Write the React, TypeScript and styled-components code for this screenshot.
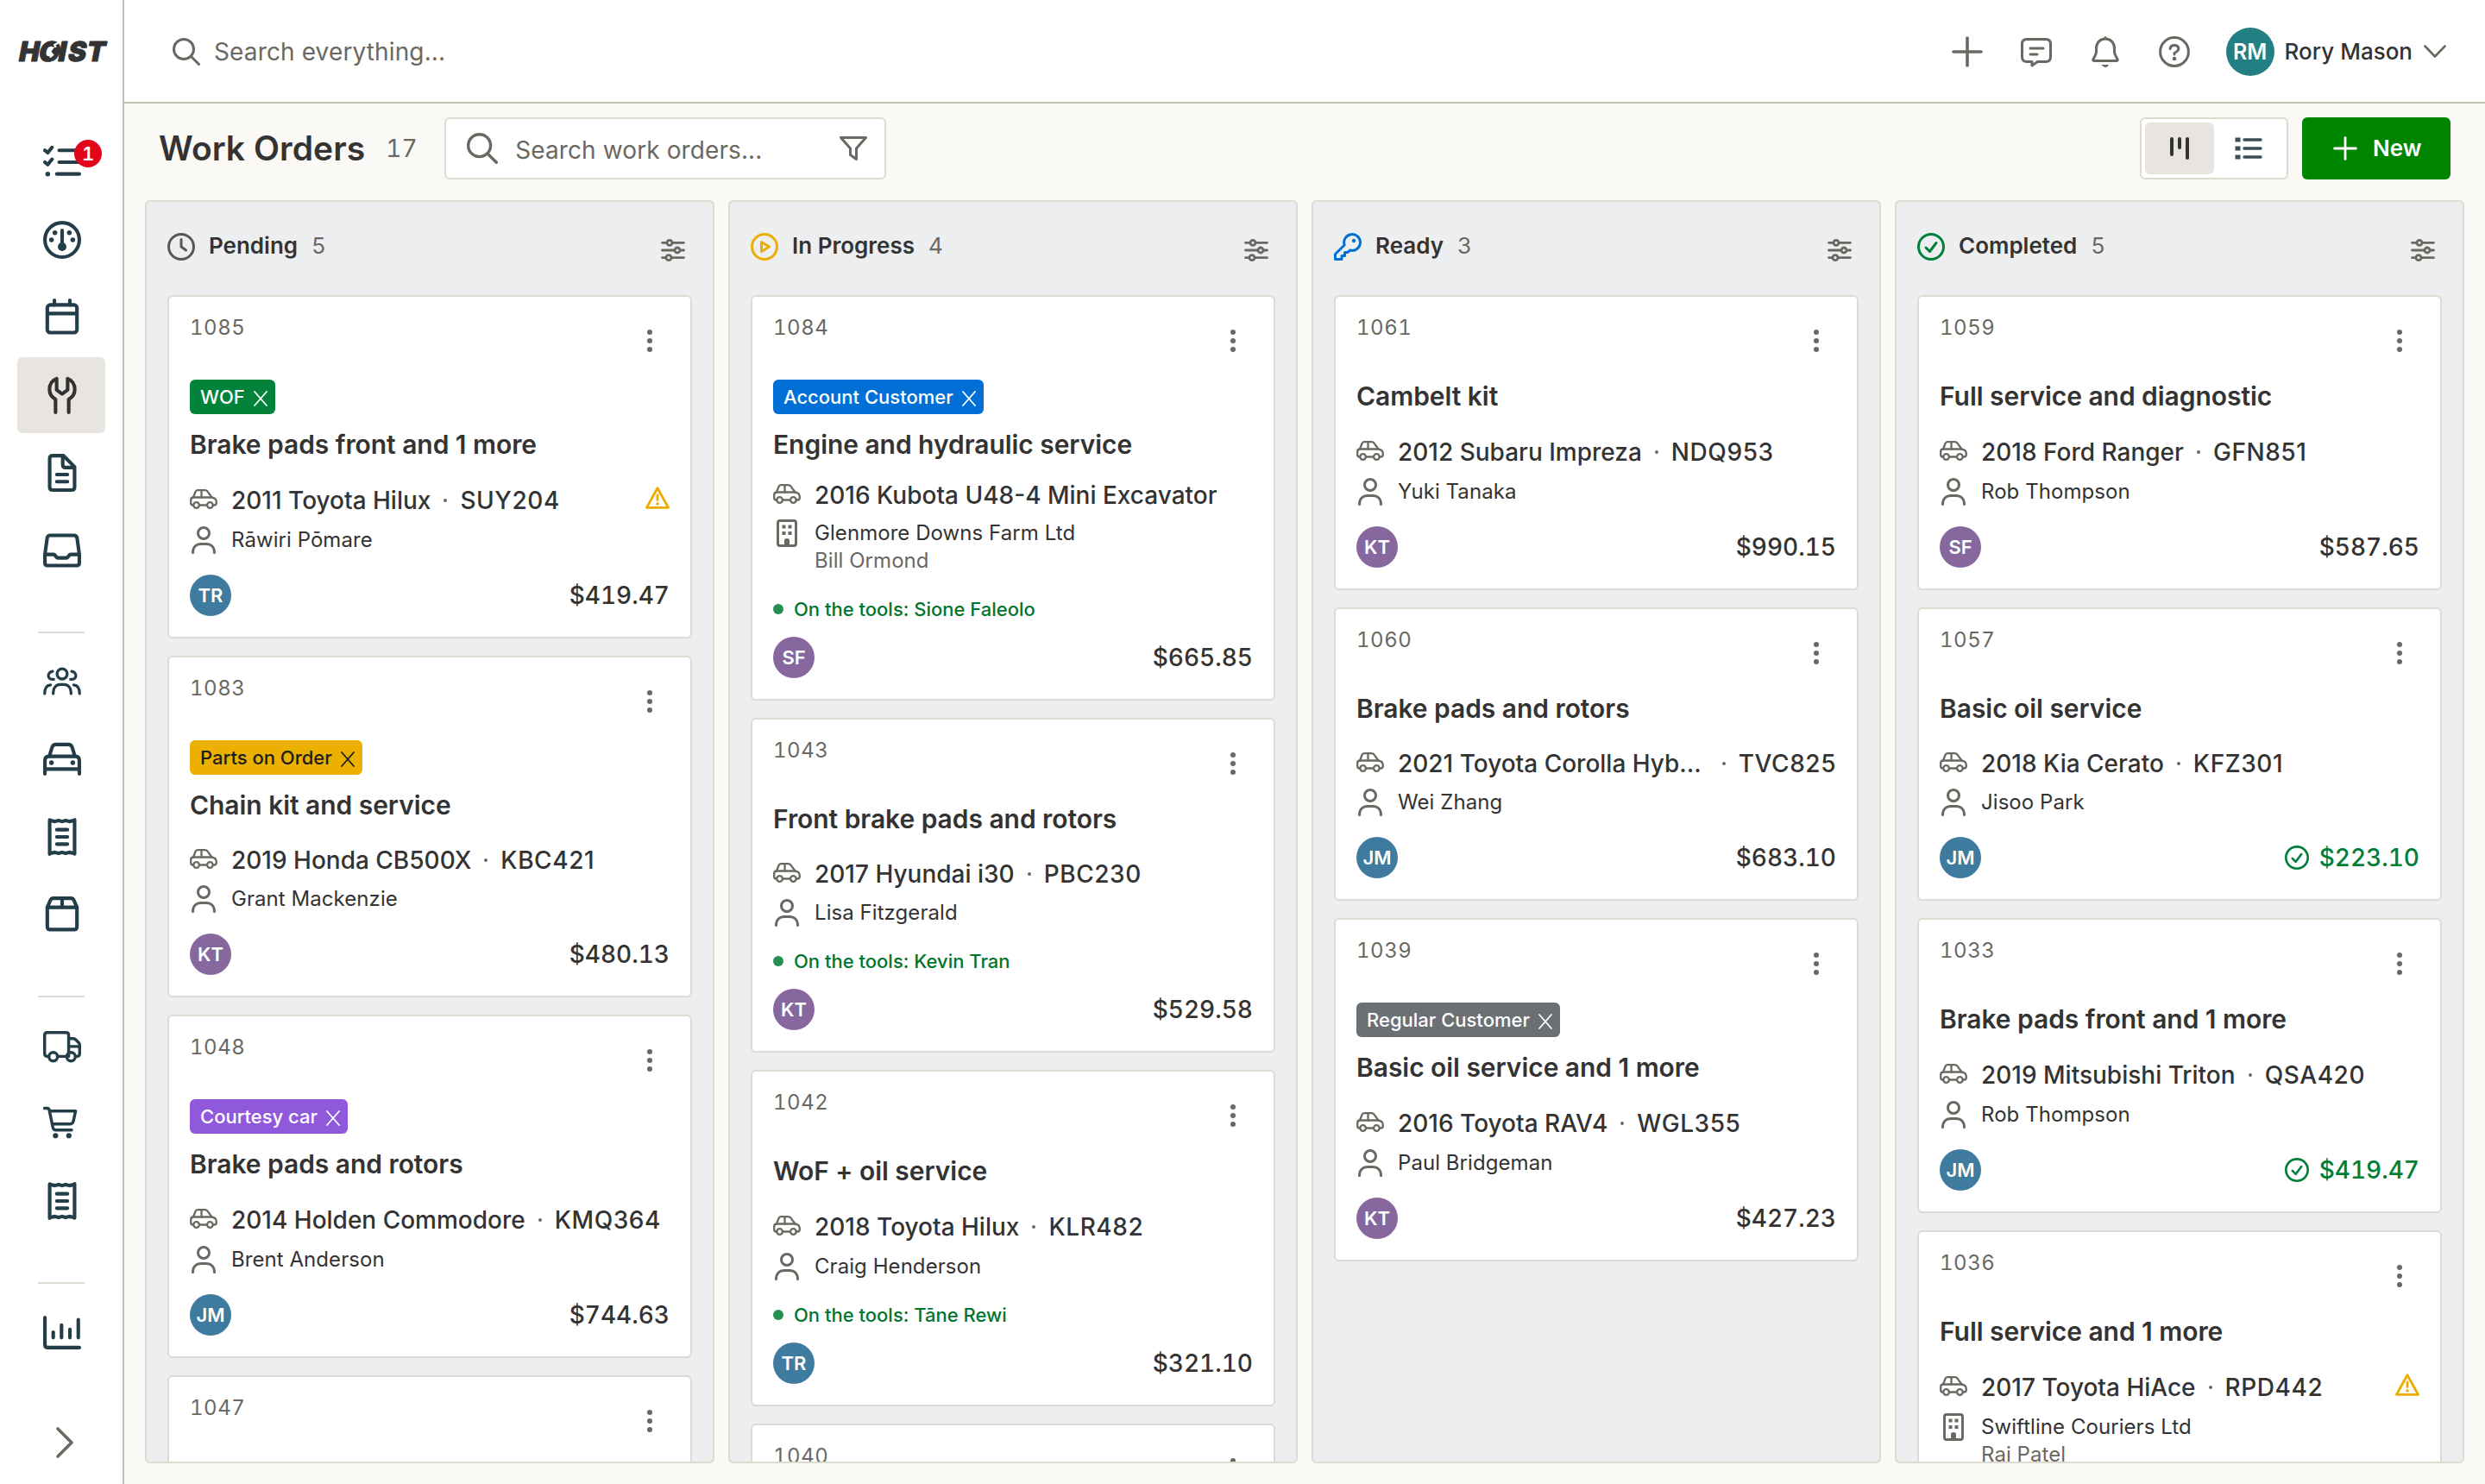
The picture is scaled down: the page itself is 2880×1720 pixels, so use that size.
import type { ReactNode } from "react";
import styled, { createGlobalStyle } from "styled-components";

const colors = {
  white: "#ffffff",
  page: "#faf9f5",
  column: "#edeef0",
  line: "#dddbd1",
  frame: "#c0beb0",
  active: "#e8e4df",
  text: "#333333",
  muted: "#6b6861",
  nav: "#233d49",
  green: "#008500",
  paid: "#007f3b",
  tools: "#00752f",
  amber: "#ebae00",
  blue: "#0070d6",
  red: "#e3061b",
};

const GlobalStyle = createGlobalStyle`
  * {
    box-sizing: border-box;
  }
  body {
    margin: 0;
    background: ${colors.page};
    color: ${colors.text};
    font-family: Inter, "Liberation Sans", sans-serif;
    font-size: 28px;
  }
  svg {
    display: block;
    flex: none;
    fill: none;
    stroke: currentColor;
    stroke-width: 3;
    stroke-linecap: round;
    stroke-linejoin: round;
  }
`;

const Layout = styled.div`
  display: flex;
  width: 2880px;
  height: 1720px;
  overflow: hidden;
`;

const Sidebar = styled.aside`
  display: flex;
  flex-direction: column;
  width: 144px;
  flex: none;
  background: ${colors.white};
  border-right: 2px solid ${colors.frame};
  padding: 0 20px;
`;

const LogoBox = styled.div`
  height: 144px;
  padding-top: 40px;

  svg {
    overflow: visible;
  }
`;

const NavGroup = styled.nav`
  display: flex;
  flex-direction: column;
  gap: 2px;
`;

const NavItem = styled.a<{ $active?: boolean }>`
  position: relative;
  display: flex;
  align-items: center;
  height: 88px;
  padding-left: 30px;
  border-radius: 6px;
  color: ${({ $active }) => ($active ? colors.text : colors.nav)};
  background: ${({ $active }) => ($active ? colors.active : "transparent")};
`;

const NavBadge = styled.span`
  position: absolute;
  top: 18px;
  left: 66px;
  width: 32px;
  height: 32px;
  border-radius: 50%;
  background: ${colors.red};
  color: ${colors.white};
  font-size: 22px;
  font-weight: 600;
  line-height: 32px;
  text-align: center;
  font-variant-numeric: tabular-nums;
`;

const NavDivider = styled.hr`
  width: 54px;
  height: 2px;
  margin: 50px 24px 12px;
  border: 0;
  background: ${colors.line};
`;

const Expand = styled.div`
  margin: auto 0 30px 44px;
  color: ${colors.muted};
`;

const Main = styled.main`
  display: flex;
  flex-direction: column;
  flex: 1;
  min-width: 0;
`;

const Topbar = styled.header`
  display: flex;
  align-items: center;
  justify-content: space-between;
  height: 120px;
  flex: none;
  padding: 0 45px 0 56px;
  background: ${colors.white};
  border-bottom: 2px solid ${colors.frame};
  color: ${colors.muted};
`;

const GlobalSearch = styled.div`
  display: flex;
  align-items: center;
  gap: 16px;
  padding-top: 2px;
  letter-spacing: 0.13px;
`;

const TopActions = styled.div`
  display: flex;
  align-items: center;
  gap: 44px;
  padding-top: 2px;
`;

const Account = styled.div`
  display: flex;
  align-items: center;
  margin-left: -2px;
`;

const AccountName = styled.span`
  margin: -2px 13px 0 12px;
  color: ${colors.text};
  font-size: 26px;
  font-weight: 500;
`;

const Avatar = styled.span<{ $color: string; $large?: boolean }>`
  display: flex;
  align-items: center;
  justify-content: center;
  width: ${({ $large }) => ($large ? 56 : 48)}px;
  height: ${({ $large }) => ($large ? 56 : 48)}px;
  border-radius: 50%;
  background: ${({ $color }) => $color};
  color: ${colors.white};
  font-size: ${({ $large }) => ($large ? 25 : 22)}px;
  font-weight: 600;
`;

const Toolbar = styled.div`
  display: flex;
  align-items: center;
  height: 72px;
  flex: none;
  margin: 16px 40px 24px;
`;

const PageTitle = styled.h1`
  margin: -2px 0 0;
  font-size: 39px;
  font-weight: 600;
  letter-spacing: 0.06px;
`;

const PageCount = styled.span`
  width: 68px;
  margin: -1px 0 0 24px;
  color: ${colors.muted};
  font-variant-numeric: tabular-nums;
`;

const SearchBox = styled.div`
  display: flex;
  align-items: center;
  width: 512px;
  height: 72px;
  padding: 0 20px 0 24px;
  border: 2px solid ${colors.line};
  border-radius: 6px;
  background: ${colors.white};
  color: ${colors.muted};
`;

const SearchHint = styled.span`
  flex: 1;
  margin-left: 20px;
  padding-top: 3px;
  letter-spacing: 0.1px;
`;

const Toggle = styled.div`
  display: flex;
  height: 72px;
  margin-left: auto;
  padding: 4px;
  border: 2px solid ${colors.line};
  border-radius: 6px;
  background: ${colors.white};
`;

const ToggleButton = styled.span<{ $on?: boolean }>`
  display: flex;
  align-items: center;
  justify-content: center;
  width: 80px;
  border-radius: 6px;
  color: ${({ $on }) => ($on ? colors.text : "#3a4e58")};
  background: ${({ $on }) => ($on ? colors.active : "transparent")};
`;

const NewButton = styled.button`
  display: flex;
  align-items: center;
  gap: 18px;
  width: 172px;
  height: 72px;
  margin-left: 16px;
  padding: 0 0 0 36px;
  border: 0;
  border-radius: 6px;
  background: ${colors.green};
  color: ${colors.white};
  font: 600 26px Inter, sans-serif;

  span {
    margin-top: -2px;
  }
`;

const Board = styled.div`
  display: grid;
  grid-template-columns: repeat(4, 660px);
  gap: 16px;
  height: 1464px;
  padding-left: 24px;
`;

const Column = styled.section`
  height: 1464px;
  padding: 0 24px;
  overflow: hidden;
  border: 2px solid ${colors.line};
  border-radius: 6px;
  background: ${colors.column};
`;

const ColumnHead = styled.div<{ $color: string }>`
  display: flex;
  align-items: center;
  height: 108px;
  padding: 0 8px 4px 0;
  color: ${({ $color }) => $color};
`;

const ColumnName = styled.h2`
  margin: -3px 16px 0 16px;
  color: ${colors.text};
  font-size: 26px;
  font-weight: 600;
`;

const ColumnCount = styled.span`
  margin-top: -3px;
  color: ${colors.muted};
  font-size: 26px;
  font-variant-numeric: tabular-nums;
`;

const ColumnTools = styled.span`
  margin: 8px 0 0 auto;
  color: ${colors.muted};
`;

const CardRow = styled.div`
  display: flex;
  gap: 16px;
`;

const Vehicle = styled(CardRow)<{ $compact: boolean }>`
  align-items: center;
  height: ${({ $compact }) => ($compact ? 32 : 44)}px;
  margin-bottom: ${({ $compact }) => ($compact ? 12 : 8)}px;
`;

const Card = styled.article`
  margin-bottom: 20px;
  padding: 24px;
  border: 2px solid ${colors.line};
  border-radius: 6px;
  background: ${colors.white};

  /* header is the first child, so this is the second card */
  &:nth-child(3) ${Vehicle} {
    height: 42px;
  }
`;

const CardHead = styled.div`
  display: flex;
  justify-content: space-between;
  height: 72px;
  color: ${colors.muted};

  svg {
    margin: 14px 20px 0 0;
  }
`;

const OrderNumber = styled.span`
  font-size: 24px;
  line-height: 24px;
  letter-spacing: 0.5px;
  font-variant-numeric: tabular-nums;
`;

const Tag = styled.div<{ $color: string; $dark?: boolean }>`
  display: flex;
  align-items: center;
  gap: 10px;
  width: max-content;
  height: 40px;
  margin-bottom: 16px;
  padding: 0 9px 0 12px;
  border-radius: 6px;
  background: ${({ $color }) => $color};
  color: ${({ $dark }) => ($dark ? "#1d1d1d" : colors.white)};
  font-size: 22px;
  font-weight: 500;

  svg {
    margin-top: 3px;
    stroke-width: 1.8;
  }
`;

const CardTitle = styled.h3`
  margin: 0 0 24px;
  font-size: 30px;
  font-weight: 600;
  line-height: 38px;
  letter-spacing: -0.05px;
`;

const IconSlot = styled.span`
  display: flex;
  justify-content: center;
  width: 32px;
  flex: none;
`;

const VehicleText = styled.div`
  display: flex;
  align-items: center;
  flex: 1;
  min-width: 0;
  font-weight: 500;
  white-space: nowrap;
`;

const VehicleName = styled.span`
  overflow: hidden;
  text-overflow: ellipsis;
`;

const Separator = styled.i`
  width: 4px;
  height: 4px;
  flex: none;
  margin: 0 15px 0 15px;
  border-radius: 50%;
  background: ${colors.muted};
`;

const Plate = styled.span`
  letter-spacing: 0.56px;
`;

const Warning = styled.span`
  margin-top: -6px;
  color: ${colors.amber};
`;

const CarSlot = styled(IconSlot)`
  margin-top: -3px;
  color: ${colors.muted};
`;

const Customer = styled(CardRow)`
  font-size: 24px;
  line-height: 32px;
  letter-spacing: 0.06px;

  ${IconSlot}, small {
    color: ${colors.muted};
  }
  small {
    display: block;
    font-size: 24px;
  }
`;

const OnTools = styled.div`
  display: flex;
  align-items: center;
  gap: 12px;
  height: 32px;
  margin: 24px 0 -8px;
  color: ${colors.tools};
  font-size: 22px;
  font-weight: 500;

  &::before {
    content: "";
    width: 12px;
    height: 12px;
    border-radius: 50%;
    background: #249150;
  }
`;

const CardFoot = styled.div`
  display: flex;
  align-items: center;
  justify-content: space-between;
  margin-top: 24px;
`;

const Price = styled.span<{ $paid?: boolean }>`
  display: flex;
  align-items: center;
  gap: 12px;
  color: ${({ $paid }) => ($paid ? colors.paid : colors.text)};
  font-weight: 500;
  font-variant-numeric: tabular-nums;
`;

/* ---- icons ---- */

const NavIcon = ({ children, stroke = 48 }: { children: ReactNode; stroke?: number }) => (
  <svg width="44" height="44" viewBox="0 0 512 512" style={{ strokeWidth: stroke }}>
    {children}
  </svg>
);

const Dot = ({ x, y, r = 32 }: { x: number; y: number; r?: number }) => (
  <circle cx={x} cy={y} r={r} fill="currentColor" stroke="none" />
);

const Logo = () => (
  <svg width="104" height="40" viewBox="0 0 104 40">
    <g transform="translate(0 31) skewX(-11)">
      <text x="0.5 23.5 46 57.5 79" y="0" fontFamily="Inter" fontWeight="900" fontSize="31.5" fill="#333" stroke="#333" style={{ strokeWidth: 1 }}>
        HOIST
      </text>
    </g>
    <path d="M47 10l-4 2 1.500 2.500-3 1.500 1.500 3-3 1.500 1.500 3-3 2.500" stroke="#fff" style={{ strokeWidth: 2 }} />
    <path d="M43 15h7v8h-8l-2.500-3.500z" fill="#333" stroke="none" />
  </svg>
);

const SearchIcon = ({ size }: { size: number }) => (
  <svg width={size} height={size} viewBox="0 0 32 32">
    <circle cx="13" cy="13" r="11.500" />
    <path d="M21.500 21.500L30.500 30.500" />
  </svg>
);

const TasksIcon = () => (
  <NavIcon>
    <path d="M24 96L62 128L120 56M24 256L62 288L120 216M216 96H488M216 256H488M184 415H488" />
    <Dot x={62} y={415} />
  </NavIcon>
);

const GaugeIcon = () => (
  <NavIcon>
    <circle cx="256" cy="256" r="232" />
    <path d="M256 128V340" />
    <Dot x={256} y={349} r={58} />
    <Dot x={159} y={159} />
    <Dot x={353} y={159} />
    <Dot x={112} y={256} />
    <Dot x={400} y={256} />
  </NavIcon>
);

const CalendarIcon = () => (
  <NavIcon>
    <rect x="56" y="86" width="400" height="374" rx="40" />
    <path d="M56 202H456M152 24V86M360 24V86" />
  </NavIcon>
);

const WrenchIcon = () => (
  <NavIcon>
    <path d="M167 488V312C110 280 86 232 86 180C86 112 124 56 182 34V184L256 240L330 184V34C388 56 426 112 426 180C426 232 402 280 345 312V488" />
  </NavIcon>
);

const DocumentIcon = () => (
  <NavIcon>
    <path d="M128 24H272L424 176V448Q424 488 384 488H128Q88 488 88 448V64Q88 24 128 24Z" />
    <path d="M264 30V144Q264 184 304 184H420M184 279H328M184 375H328" />
  </NavIcon>
);

const InboxIcon = () => (
  <NavIcon>
    <path d="M24 308L54 90Q60 52 98 52H414Q452 52 458 90L488 308V422Q488 460 450 460H62Q24 460 24 422Z" />
    <path d="M24 310H140Q154 310 162 322L178 344Q186 357 200 357H312Q326 357 334 344L350 322Q358 310 372 310H488" />
  </NavIcon>
);

const PeopleIcon = () => (
  <NavIcon stroke={38}>
    <circle cx="256" cy="152" r="69" />
    <path d="M136 418V400C136 340 174 296 230 296H282C338 296 376 340 376 400V418" />
    <path d="M128 117C50 128 50 236 142 226M384 117C462 128 462 236 370 226" />
    <path d="M20 418C20 350 50 306 100 302M492 418C492 350 462 306 412 302" />
  </NavIcon>
);

const CarFrontIcon = () => (
  <NavIcon>
    <path d="M84 214L120 96Q132 56 174 56H338Q380 56 392 96L428 214" />
    <path d="M24 454V272Q24 217 78 217H434Q488 217 488 272V454M24 388H488" />
    <Dot x={112} y={303} />
    <Dot x={400} y={303} />
  </NavIcon>
);

const ReceiptIcon = () => (
  <NavIcon>
    <path d="M88 26L112 38L159 48L207 34L256 48L304 34L353 48L400 38L424 26V486L400 474L353 464L304 478L256 464L207 478L159 464L112 474L88 486Z" />
    <path d="M184 159H328M184 256H328M184 353H328" />
  </NavIcon>
);

const BoxIcon = () => (
  <NavIcon>
    <path d="M56 158L98 62Q110 36 138 36H374Q402 36 414 62L456 158V418Q456 458 416 458H96Q56 458 56 418Z" />
    <path d="M56 158H456M256 36V158" />
  </NavIcon>
);

const TruckIcon = () => (
  <NavIcon stroke={40}>
    <path d="M76 400H56Q20 400 20 364V112Q20 78 54 78H310Q344 78 344 112V400M194 400H318" />
    <path d="M344 160H408Q424 160 436 172L480 216Q492 228 492 246V364Q492 400 456 400H436M344 266H490" />
    <circle cx="136" cy="404" r="58" />
    <circle cx="376" cy="404" r="58" />
  </NavIcon>
);

const CartIcon = () => (
  <NavIcon stroke={40}>
    <path d="M18 52H56Q76 52 82 74L132 312Q140 346 172 346H384M90 90H438L408 224Q400 264 364 264H122" />
    <Dot x={167} y={422} r={36} />
    <Dot x={347} y={422} r={36} />
  </NavIcon>
);

const ChartIcon = () => (
  <NavIcon>
    <path d="M24 60V424Q24 464 64 464H488M136 256V330M248 160V330M361 218V330M474 88V330" />
  </NavIcon>
);

const PlusIcon = ({ size }: { size: number }) => (
  <svg width={size} height={size} viewBox="0 0 36 36" style={{ strokeWidth: 3.6 }}>
    <path d="M18 2V34M2 18H34" />
  </svg>
);

const MessageIcon = () => (
  <svg width="36" height="36" viewBox="0 0 36 36">
    <path d="M7 3.500H29Q34.500 3.500 34.500 9V24Q34.500 29.500 29 29.500H19.500L13 34V29.500H7Q1.500 29.500 1.500 24V9Q1.500 3.500 7 3.500ZM11 14H26M11 21H19" />
  </svg>
);

const BellIcon = () => (
  <svg width="36" height="36" viewBox="0 0 36 36">
    <path d="M18 1.500V3M18 3C11.500 3 7.500 8 7.500 14V18C7.500 22 5 24 3.800 27Q3.500 28.500 5 28.500H31Q32.500 28.500 32.200 27C31 24 28.500 22 28.500 18V14C28.500 8 24.500 3 18 3Z" />
    <path d="M14.500 33.500H21.500Q20 35.500 18 35.500T14.500 33.500Z" fill="currentColor" style={{ strokeWidth: 1 }} />
  </svg>
);

const HelpIcon = () => (
  <svg width="36" height="36" viewBox="0 0 36 36">
    <circle cx="18" cy="18" r="16.400" />
    <path d="M13.200 14.500Q13.500 10.500 18 10.500Q22.800 10.500 22.800 14.500Q22.800 17 18 19.500V21" />
    <Dot x={18} y={26} r={2.300} />
  </svg>
);

const ChevronDown = () => (
  <svg width="26" height="16" viewBox="0 0 26 16" style={{ strokeWidth: 2.6 }}>
    <path d="M1.500 1.500L13 13.500L24.500 1.500" />
  </svg>
);

const FunnelIcon = () => (
  <svg width="32" height="28" viewBox="0 0 32 28">
    <path d="M1.500 1.500H30.500L19.500 14V26.500L12.500 21.500V14Z" />
  </svg>
);

const BoardIcon = () => (
  <svg width="22" height="26" viewBox="0 0 22 26" style={{ strokeWidth: 4 }}>
    <path d="M2 2V20M11 2V12M20 2V24" />
  </svg>
);

const ListIcon = () => (
  <svg width="32" height="26" viewBox="0 0 32 26" style={{ strokeWidth: 3.4 }}>
    <path d="M11 3H30M11 13H30M11 23H30" />
    <path d="M3 3h1M3 13h1M3 23h1" style={{ strokeWidth: 5 }} strokeLinecap="square" />
  </svg>
);

const ClockIcon = () => (
  <svg width="32" height="32" viewBox="0 0 32 32">
    <circle cx="16" cy="16" r="14.500" />
    <path d="M16 7.500V16L21.500 20" />
  </svg>
);

const PlayIcon = () => (
  <svg width="32" height="32" viewBox="0 0 32 32">
    <circle cx="16" cy="16" r="14.500" />
    <path d="M12.500 10.500V21.500L21.500 16Z" />
  </svg>
);

const KeyIcon = () => (
  <svg width="32" height="32" viewBox="0 0 32 32">
    <path d="M12.200 14A9.400 9.400 0 1 1 18.500 20L16 22.500H12.500V26.500H9V30.500H1.500V24.500Z" />
    <Dot x={23} y={9} r={2.200} />
  </svg>
);

const CheckIcon = ({ size }: { size: number }) => (
  <svg width={size} height={size} viewBox="0 0 32 32">
    <circle cx="16" cy="16" r="14.500" />
    <path d="M10 17L14.500 21.500L22 11.500" />
  </svg>
);

const SlidersIcon = () => (
  <svg width="28" height="28" viewBox="0 0 28 28" style={{ strokeWidth: 2.800 }}>
    <path d="M1.500 5.300H6.500M13.500 5.300H26.500M1.500 14H15.500M22.500 14H26.500M1.500 22.700H5.500M12.500 22.700H26.500" />
    <circle cx="10" cy="5.300" r="3" />
    <circle cx="19" cy="14" r="3" />
    <circle cx="9" cy="22.700" r="3" />
  </svg>
);

const KebabIcon = () => (
  <svg width="6" height="26" viewBox="0 0 6 26">
    <Dot x={3} y={3} r={3} />
    <Dot x={3} y={13} r={3} />
    <Dot x={3} y={23} r={3} />
  </svg>
);

const CloseIcon = () => (
  <svg width="16" height="18" viewBox="0 0 16 18">
    <path d="M1 1L15 17M15 1L1 17" />
  </svg>
);

const CarIcon = () => (
  <svg width="32" height="23" viewBox="0 0 32 23" style={{ strokeWidth: 2.300 }}>
    <path d="M4 9.500L6.500 3Q7.200 1.200 9 1.200H17.500Q19.300 1.200 20.500 2.600L25.500 9.500M13.500 1.200V9.500" />
    <path d="M4 18.500H3.500Q1.200 18.500 1.200 16V12.500Q1.200 9.500 4.200 9.500H25Q30.800 10 30.800 15V16Q30.800 18.500 28 18.500H27M11.500 18.500H19.500" />
    <circle cx="7.600" cy="18.500" r="3.300" />
    <circle cx="23.400" cy="18.500" r="3.300" />
  </svg>
);

const UserIcon = () => (
  <svg width="28" height="32" viewBox="0 0 28 32">
    <circle cx="14" cy="8" r="6.500" />
    <path d="M1.500 30.500C1.500 24 5.500 20.500 11 20.500H17C22.500 20.500 26.500 24 26.500 30.500" />
  </svg>
);

const BuildingIcon = () => (
  <svg width="24" height="32" viewBox="0 0 24 32">
    <rect x="1.500" y="1.500" width="21" height="29" rx="2.500" />
    <path d="M6.500 6.500h4v4h-4zM13.500 6.500h4v4h-4zM6.500 14h4v4h-4zM13.500 14h4v4h-4zM9 30.500V24.500Q9 22 12 22T15 24.500V30.500Z" fill="currentColor" stroke="none" />
  </svg>
);

const WarningIcon = () => (
  <svg width="28" height="26" viewBox="0 0 28 26" style={{ strokeWidth: 2.800 }}>
    <path d="M14 1.800L26.500 24.300H1.500Z" />
    <path d="M14 10V15.500" />
    <Dot x={14} y={20} r={1.800} />
  </svg>
);

/* ---- data ---- */

type Order = {
  id: number;
  title?: string;
  tag?: { label: string; color: string; dark?: boolean };
  vehicle?: string;
  plate?: string;
  customer?: string;
  contact?: string;
  tools?: string;
  tech?: string;
  price?: string;
  paid?: boolean;
  warn?: boolean;
};

const techColors: Record<string, string> = {
  TR: "#3e7b9f",
  JM: "#3e7b9f",
  KT: "#86689f",
  SF: "#86689f",
};

const columns: { name: string; count: number; color: string; icon: ReactNode; orders: Order[] }[] = [
  {
    name: "Pending",
    count: 5,
    color: "#575757",
    icon: <ClockIcon />,
    orders: [
      { id: 1085, tag: { label: "WOF", color: "#03833a" }, title: "Brake pads front and 1 more", vehicle: "2011 Toyota Hilux", plate: "SUY204", customer: "Rāwiri Pōmare", tech: "TR", price: "$419.47", warn: true },
      { id: 1083, tag: { label: "Parts on Order", color: "#ebb000", dark: true }, title: "Chain kit and service", vehicle: "2019 Honda CB500X", plate: "KBC421", customer: "Grant Mackenzie", tech: "KT", price: "$480.13" },
      { id: 1048, tag: { label: "Courtesy car", color: "#9059dc" }, title: "Brake pads and rotors", vehicle: "2014 Holden Commodore", plate: "KMQ364", customer: "Brent Anderson", tech: "JM", price: "$744.63" },
      { id: 1047 },
    ],
  },
  {
    name: "In Progress",
    count: 4,
    color: colors.amber,
    icon: <PlayIcon />,
    orders: [
      { id: 1084, tag: { label: "Account Customer", color: colors.blue }, title: "Engine and hydraulic service", vehicle: "2016 Kubota U48-4 Mini Excavator", customer: "Glenmore Downs Farm Ltd", contact: "Bill Ormond", tools: "Sione Faleolo", tech: "SF", price: "$665.85" },
      { id: 1043, title: "Front brake pads and rotors", vehicle: "2017 Hyundai i30", plate: "PBC230", customer: "Lisa Fitzgerald", tools: "Kevin Tran", tech: "KT", price: "$529.58" },
      { id: 1042, title: "WoF + oil service", vehicle: "2018 Toyota Hilux", plate: "KLR482", customer: "Craig Henderson", tools: "Tāne Rewi", tech: "TR", price: "$321.10" },
      { id: 1040 },
    ],
  },
  {
    name: "Ready",
    count: 3,
    color: colors.blue,
    icon: <KeyIcon />,
    orders: [
      { id: 1061, title: "Cambelt kit", vehicle: "2012 Subaru Impreza", plate: "NDQ953", customer: "Yuki Tanaka", tech: "KT", price: "$990.15" },
      { id: 1060, title: "Brake pads and rotors", vehicle: "2021 Toyota Corolla Hybrid", plate: "TVC825", customer: "Wei Zhang", tech: "JM", price: "$683.10" },
      { id: 1039, tag: { label: "Regular Customer", color: "#6b7075" }, title: "Basic oil service and 1 more", vehicle: "2016 Toyota RAV4", plate: "WGL355", customer: "Paul Bridgeman", tech: "KT", price: "$427.23" },
    ],
  },
  {
    name: "Completed",
    count: 5,
    color: colors.paid,
    icon: <CheckIcon size={32} />,
    orders: [
      { id: 1059, title: "Full service and diagnostic", vehicle: "2018 Ford Ranger", plate: "GFN851", customer: "Rob Thompson", tech: "SF", price: "$587.65" },
      { id: 1057, title: "Basic oil service", vehicle: "2018 Kia Cerato", plate: "KFZ301", customer: "Jisoo Park", tech: "JM", price: "$223.10", paid: true },
      { id: 1033, title: "Brake pads front and 1 more", vehicle: "2019 Mitsubishi Triton", plate: "QSA420", customer: "Rob Thompson", tech: "JM", price: "$419.47", paid: true },
      { id: 1036, title: "Full service and 1 more", vehicle: "2017 Toyota HiAce", plate: "RPD442", customer: "Swiftline Couriers Ltd", contact: "Raj Patel", warn: true },
    ],
  },
];

const OrderCard = ({ order }: { order: Order }) => (
  <Card>
    <CardHead>
      <OrderNumber>{order.id}</OrderNumber>
      <KebabIcon />
    </CardHead>
    {order.tag && (
      <Tag $color={order.tag.color} $dark={order.tag.dark}>
        {order.tag.label}
        <CloseIcon />
      </Tag>
    )}
    {order.title && <CardTitle>{order.title}</CardTitle>}
    {order.vehicle && (
      <Vehicle $compact={!order.plate}>
        <CarSlot>
          <CarIcon />
        </CarSlot>
        <VehicleText>
          <VehicleName>{order.vehicle}</VehicleName>
          {order.plate && (
            <>
              <Separator />
              <Plate>{order.plate}</Plate>
            </>
          )}
        </VehicleText>
        {order.warn && (
          <Warning>
            <WarningIcon />
          </Warning>
        )}
      </Vehicle>
    )}
    {order.customer && (
      <Customer>
        <IconSlot>{order.contact ? <BuildingIcon /> : <UserIcon />}</IconSlot>
        <div>
          {order.customer}
          {order.contact && <small>{order.contact}</small>}
        </div>
      </Customer>
    )}
    {order.tools && <OnTools>On the tools: {order.tools}</OnTools>}
    {order.tech && (
      <CardFoot>
        <Avatar $color={techColors[order.tech]}>{order.tech}</Avatar>
        <Price $paid={order.paid}>
          {order.paid && <CheckIcon size={28} />}
          {order.price}
        </Price>
      </CardFoot>
    )}
  </Card>
);

const App = () => {
  return (
    <Layout>
      <GlobalStyle />
      <Sidebar>
        <LogoBox>
          <Logo />
        </LogoBox>
        <NavGroup>
          <NavItem>
            <TasksIcon />
            <NavBadge>1</NavBadge>
          </NavItem>
          <NavItem><GaugeIcon /></NavItem>
          <NavItem><CalendarIcon /></NavItem>
          <NavItem $active><WrenchIcon /></NavItem>
          <NavItem><DocumentIcon /></NavItem>
          <NavItem><InboxIcon /></NavItem>
        </NavGroup>
        <NavDivider />
        <NavGroup>
          <NavItem><PeopleIcon /></NavItem>
          <NavItem><CarFrontIcon /></NavItem>
          <NavItem><ReceiptIcon /></NavItem>
          <NavItem><BoxIcon /></NavItem>
        </NavGroup>
        <NavDivider />
        <NavGroup>
          <NavItem><TruckIcon /></NavItem>
          <NavItem><CartIcon /></NavItem>
          <NavItem><ReceiptIcon /></NavItem>
        </NavGroup>
        <NavDivider />
        <NavGroup>
          <NavItem><ChartIcon /></NavItem>
        </NavGroup>
        <Expand>
          <svg width="22" height="36" viewBox="0 0 22 36" style={{ strokeWidth: 3.6 }}>
            <path d="M3 2L19 18L3 34" />
          </svg>
        </Expand>
      </Sidebar>

      <Main>
        <Topbar>
          <GlobalSearch>
            <SearchIcon size={32} />
            Search everything...
          </GlobalSearch>
          <TopActions>
            <PlusIcon size={36} />
            <MessageIcon />
            <BellIcon />
            <HelpIcon />
            <Account>
              <Avatar $color="#228084" $large>RM</Avatar>
              <AccountName>Rory Mason</AccountName>
              <ChevronDown />
            </Account>
          </TopActions>
        </Topbar>

        <Toolbar>
          <PageTitle>Work Orders</PageTitle>
          <PageCount>17</PageCount>
          <SearchBox>
            <SearchIcon size={36} />
            <SearchHint>Search work orders...</SearchHint>
            <FunnelIcon />
          </SearchBox>
          <Toggle>
            <ToggleButton $on><BoardIcon /></ToggleButton>
            <ToggleButton><ListIcon /></ToggleButton>
          </Toggle>
          <NewButton>
            <PlusIcon size={28} />
            <span>New</span>
          </NewButton>
        </Toolbar>

        <Board>
          {columns.map((column) => (
            <Column key={column.name}>
              <ColumnHead $color={column.color}>
                {column.icon}
                <ColumnName>{column.name}</ColumnName>
                <ColumnCount>{column.count}</ColumnCount>
                <ColumnTools><SlidersIcon /></ColumnTools>
              </ColumnHead>
              {column.orders.map((order) => (
                <OrderCard key={order.id} order={order} />
              ))}
            </Column>
          ))}
        </Board>
      </Main>
    </Layout>
  );
};

export default App;
